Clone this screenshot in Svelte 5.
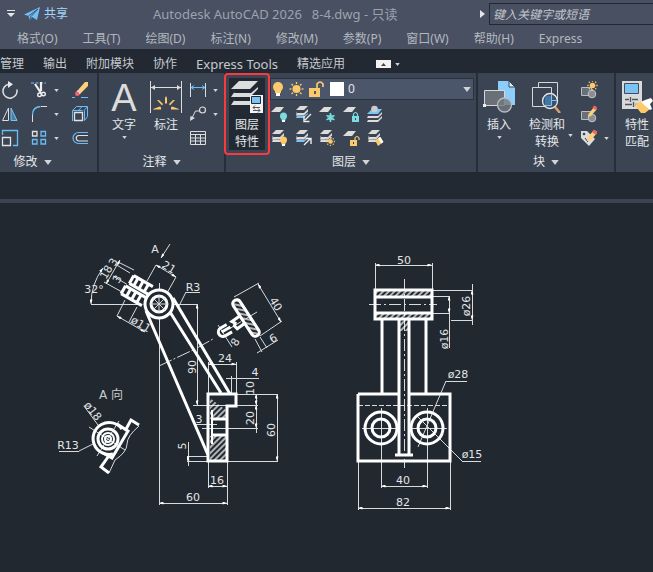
<script lang="ts">
  interface DimText { t: string; x: number; y: number; r?: number }
  type Line = [number, number, number, number]

  const menus = ['格式(O)', '工具(T)', '绘图(D)', '标注(N)', '修改(M)', '参数(P)', '窗口(W)', '帮助(H)', 'Express']
  const tabs = ['管理', '输出', '附加模块', '协作', 'Express Tools', '精选应用']
  const modifyTools = ['rotate', 'trim', 'erase', 'mirror', 'fillet', 'explode', 'scale', 'array', 'offset']
  const annotateTools = ['linear', 'leader', 'table']
  const layerTools = ['off', 'current', 'freeze', 'lock', 'walk', 'on', 'previous', 'thaw', 'unlock', 'match']
  const blockTools = ['create', 'edit', 'attribute']

  let search = $state('')
  let layer = $state('0')

  const dimTexts: DimText[] = [
    { t: 'A', x: 155, y: 249 },
    { t: '21', x: 169, y: 267, r: 30 },
    { t: '18', x: 106, y: 272, r: -60 },
    { t: '3', x: 113, y: 262, r: -60 },
    { t: '3', x: 117, y: 279, r: -60 },
    { t: '32°', x: 94, y: 289 },
    { t: 'R3', x: 193, y: 287 },
    { t: 'ø11', x: 141, y: 324, r: 30 },
    { t: '90', x: 192, y: 367, r: -90 },
    { t: '40', x: 276, y: 304, r: 58 },
    { t: '6', x: 273, y: 338, r: -30 },
    { t: '8', x: 235, y: 342, r: -60 },
    { t: '24', x: 225, y: 358 },
    { t: '4', x: 255, y: 372 },
    { t: '10', x: 250, y: 388, r: -90 },
    { t: '20', x: 250, y: 418, r: -90 },
    { t: '60', x: 271, y: 430, r: -90 },
    { t: '3', x: 199, y: 419 },
    { t: '5', x: 182, y: 446, r: -90 },
    { t: '16', x: 217, y: 480 },
    { t: '60', x: 193, y: 497 },
    { t: 'ø18', x: 93, y: 411, r: 52 },
    { t: 'R13', x: 68, y: 445 },
    { t: '50', x: 404, y: 260 },
    { t: 'ø26', x: 466, y: 306, r: -90 },
    { t: 'ø16', x: 444, y: 339, r: -90 },
    { t: 'ø28', x: 458, y: 374 },
    { t: 'ø15', x: 472, y: 454 },
    { t: '40', x: 403, y: 480 },
    { t: '82', x: 403, y: 502 },
  ]

  // Dimension lines, drawn with an arrow head at both ends
  const dims: Line[] = [
    [156, 265, 176, 277],
    [120, 260, 106, 284],
    [117, 316, 145, 332],
    [197, 304, 197, 405],
    [258, 284, 281, 322],
    [208, 364, 236, 364],
    [256, 394, 256, 405],
    [256, 405, 256, 428],
    [277, 394, 277, 461],
    [188, 456, 188, 461],
    [208, 486, 227, 486],
    [159, 503, 227, 503],
    [375, 265, 432, 265],
    [472, 290, 472, 320],
    [449, 296, 449, 313],
    [381, 486, 427, 486],
    [358, 508, 450, 508],
  ]

  // Extension lines and leaders
  const thin: Line[] = [
    [91, 304, 197, 304], [159, 283, 159, 505],
    [156, 265, 147, 281], [176, 277, 167, 293],
    [118, 262, 134, 270], [104, 282, 122, 292], [113, 276, 160, 304], [115, 264, 130, 273],
    [117, 316, 125, 300], [129, 322, 137, 307],
    [186, 292, 200, 292], [186, 292, 178, 308],
    [234, 297, 259, 283], [260, 336, 282, 321],
    [257, 353, 278, 340], [255, 339, 262, 352], [260, 337, 267, 348],
    [218, 325, 232, 347],
    [208, 362, 208, 394], [236, 362, 236, 394], [231, 376, 231, 394],
    [226, 378, 259, 378],
    [236, 394, 278, 394], [193, 405, 227, 405], [236, 405, 258, 405], [202, 428, 258, 428], [256, 428, 256, 433],
    [196, 424, 217, 424], [187, 461, 278, 461], [187, 456, 208, 456], [188, 442, 188, 466],
    [208, 461, 208, 488], [227, 461, 227, 505],
    [84, 406, 98, 425], [59, 451, 79, 451], [79, 451, 93, 444],
    [89, 427, 125, 450], [119, 421, 97, 456],
    [375, 263, 375, 289], [432, 263, 432, 289],
    [433, 290, 473, 290], [451, 320, 473, 320], [472, 284, 472, 325],
    [433, 296, 450, 296], [433, 313, 450, 313], [449, 313, 449, 348],
    [446, 381, 467, 381], [446, 381, 418, 447],
    [462, 461, 481, 461], [462, 461, 416, 415],
    [362, 428, 400, 428], [409, 428, 447, 428], [381, 408, 381, 488], [427, 408, 427, 488],
    [358, 461, 358, 510], [450, 461, 450, 510],
  ]
</script>

{#snippet caret(cls = '')}
  <svg class="caret {cls}" width="5" height="3" viewBox="0 0 6 4" aria-hidden="true"><path d="M0 0h6L3 4z" /></svg>
{/snippet}

{#snippet bulb(color: string)}
  <path d="M11.500 14h4v1.500h-4z" fill={color} />
  <circle cx="13.500" cy="11" r="3.500" fill={color} />
  <path d="M12 15h3v2h-3z" fill="#fff" />
{/snippet}

{#snippet sun(x: number, y: number, r: number)}
  <circle cx={x} cy={y} {r} fill="#fdca6b" />
  {#each [0, 45, 90, 135, 180, 225, 270, 315] as a}
    <path d="M{x + r + 1} {y}h{r / 2}" stroke="#fdca6b" stroke-width="1.300" transform="rotate({a} {x} {y})" />
  {/each}
{/snippet}

{#snippet stack(mid: string, bottom: string)}
  <path d="M6 1h8l-4 4H2z" fill="#dcdcdc" />
  <path d="M3 6.500 2 8h8l4-4v2.500l-4 4H2z" fill={mid} />
  <path d="M3 10.500 2 13h8l4-4v-1l-4 3z" fill={bottom} />
{/snippet}

{#snippet icon(name: string)}
  <svg class="icon" width="18" height="18" viewBox="0 0 18 18" fill="none" aria-hidden="true">
    {#if name === 'rotate'}
      <path d="M15.800 8.500A7 7 0 1 1 8 3.200" stroke="#e2e2e2" stroke-width="1.500" />
      <path d="M7 0l5 3.300L7 7z" fill="#e8e8e8" />
    {:else if name === 'trim'}
      <path d="M1 2h15" stroke="#7cc3f5" stroke-dasharray="3 1.500" />
      <path d="M5 3l6 9M11 1v9" stroke="#eee" stroke-width="2.200" />
      <circle cx="9.500" cy="13.800" r="1.800" stroke="#eee" stroke-width="1.400" />
      <circle cx="13.500" cy="13" r="1.800" stroke="#eee" stroke-width="1.400" />
    {:else if name === 'erase'}
      <path d="M14 1l3 0v4l-7 7-3-3z" fill="#fdd07a" />
      <path d="M7 9l3 3-1.500 1.500-3-3z" fill="#fff" />
      <circle cx="6.300" cy="12.700" r="2.300" fill="#f4636b" />
      <path d="M1 16.500h3M10 16.500h7" stroke="#68bdf6" />
    {:else if name === 'mirror'}
      <path d="M7.500 3v12.500H1.500z" stroke="#ddd" />
      <path d="M10 3v12.500h6z" fill="#487fa9" stroke="#7cc3f5" />
    {:else if name === 'fillet'}
      <path d="M2.500 17V9" stroke="#ddd" />
      <path d="M2.500 10q0-8 8-8.500" stroke="#68bdf6" stroke-width="1.300" />
      <path d="M11 1.500h6" stroke="#ddd" />
    {:else if name === 'explode'}
      <path d="M3.500 7.500h8v8h-8z" stroke="#e2e2e2" stroke-width="1.300" />
      <path d="M1.500 16V5.500h10M2 5l3.500-3.500h11L13 5.500M8 5l3-3.500M16.500 2v9.500l-3 4V5.500" stroke="#68bdf6" />
    {:else if name === 'scale'}
      <path d="M1.500 8.500h8v8h-8z" stroke="#e2e2e2" stroke-width="1.300" />
      <path d="M1.500 6V1.500h15v15H12" stroke="#68bdf6" stroke-width="1.300" />
    {:else if name === 'array'}
      <path d="M2.500 2.500H7V7H2.500z" stroke="#e2e2e2" stroke-width="1.300" />
      <path d="M11 2.500h4.500V7H11zM2.500 10.500H7V15H2.500zM11 10.500h4.500V15H11z" stroke="#68bdf6" stroke-width="1.300" />
    {:else if name === 'offset'}
      <path d="M17 3.500H7.500a5.500 5.500 0 0 0 0 11H17" stroke="#68bdf6" stroke-width="1.200" />
      <path d="M17 6.500H8a2.700 2.700 0 0 0 0 5.500h9" stroke="#e2e2e2" stroke-width="1.200" />
    {:else if name === 'linear'}
      <path d="M1.500 2v14M16.500 2v14" stroke="#ddd" />
      <path d="M2 6.500h14M5 4.500l-3 2 3 2M13 4.500l3 2-3 2" stroke="#68bdf6" />
    {:else if name === 'leader'}
      <circle cx="13.500" cy="5" r="3" stroke="#ddd" stroke-width="1.200" />
      <path d="M10.500 6H6.500L3 13" stroke="#ddd" />
      <path d="M1 16l.5-5L6 13z" fill="#ddd" />
    {:else if name === 'table'}
      <path d="M1.500 2.500h15v13h-15zM1.500 5.500h15M1.500 9h15M1.500 12h15M6.500 6v9.500M11.500 6v9.500" stroke="#ddd" />
    {:else if name === 'off'}
      <path d="M6 2h8l-4 5H1z" fill="#dcdcdc" />
      {@render bulb('#7adbe3')}
    {:else if name === 'current'}
      {@render stack('#dcdcdc', '#7cc3f5')}
      <path d="M17 9l-6 6M10 11v5.500h5.500" stroke="#eee" stroke-width="1.400" />
    {:else if name === 'freeze'}
      <path d="M6 2h8l-4 5H1z" fill="#dcdcdc" />
      <path d="M12.500 8v9M8.500 10.300l8 4.500M16.500 10.300l-8 4.500" stroke="#7adbe3" stroke-width="1.500" />
      <circle cx="12.500" cy="12.500" r="2.500" stroke="#7adbe3" />
    {:else if name === 'lock'}
      <path d="M6 2h8l-4 5H1z" fill="#dcdcdc" />
      <path d="M10 11h7v6h-7z" fill="#7adbe3" />
      <path d="M11.500 11V9q2-3 4 0v2" stroke="#7adbe3" stroke-width="1.200" />
      <path d="M13 13h1v2h-1z" fill="#3b4453" />
    {:else if name === 'walk'}
      <path d="M6 4h10l-4 5H1z" fill="#7cc3f5" />
      <circle cx="8.500" cy="4" r="3.300" fill="#c9cbcf" />
      <path d="M2 11h10l4-4v2l-4 4H1zM2 15h10l4-4v2l-4 4H1z" fill="#dcdcdc" />
    {:else if name === 'on'}
      {@render stack('#dcdcdc', '#dcdcdc')}
      {@render bulb('#fdca6b')}
    {:else if name === 'previous'}
      {@render stack('#dcdcdc', '#7cc3f5')}
      <path d="M10 16l6-6M11.500 9.500H17V15" stroke="#eee" stroke-width="1.400" />
    {:else if name === 'thaw'}
      {@render stack('#dcdcdc', '#dcdcdc')}
      {@render sun(12.500, 12.500, 2.300)}
    {:else if name === 'unlock'}
      <path d="M6 2h8l-4 5H1z" fill="#dcdcdc" />
      <path d="M8 11h7v6H8z" fill="#fdca6b" />
      <path d="M13 11V9q2-3 4 0v2" stroke="#fdca6b" stroke-width="1.200" />
      <path d="M11 13h1v2h-1z" fill="#3b4453" />
    {:else if name === 'match'}
      {@render stack('#dcdcdc', '#dcdcdc')}
      <path d="M9 11l4-2 3 5-4 3z" fill="#fdca6b" />
      <path d="M12 9l2.500-1 3 5-2 1.500z" fill="#fff" />
    {:else if name === 'create' || name === 'edit'}
      <path d="M1.500 6.500h10v8h-10z" fill="#6b7078" stroke="#b9bcc1" />
      <circle cx="12" cy="13" r="3.800" fill="#8a8e95" stroke="#c4c6ca" />
      {#if name === 'create'}
        {@render sun(12.500, 4.500, 2.800)}
      {:else}
        <path d="M14 2l3 2-6 7-3 1 .5-3z" fill="#fdd07a" />
        <path d="M14 .500l3 1.500-1.500 3-3-2z" fill="#f4636b" />
      {/if}
    {:else if name === 'attribute'}
      <path d="M1 2h6l8 8-6 7-8-8z" fill="#dcdcdc" />
      <circle cx="4" cy="5" r="1.300" fill="#3b4453" />
      <path d="M5 9l3 4" stroke="#3b4453" />
      <path d="M13 2l4 2-6 7-4 1 1-4z" fill="#fdd07a" />
      <path d="M13.500 .500l4 2-2 3-3-2z" fill="#f4636b" />
    {/if}
  </svg>
{/snippet}

<div class="app">
  <header class="title-bar">
    <button class="quick" type="button" aria-label="自定义快速访问工具栏">
      <svg width="8" height="8" viewBox="0 0 8 8"><path d="M0 0h8v1H0zM0 3h8L4 7z" fill="#e4e6e9" /></svg>
    </button>
    <button class="share" type="button">
      <svg width="16" height="15" viewBox="0 0 16 15" aria-hidden="true">
        <path d="M0 7.500 16 0l-3 13-5-3-2.500 4-1-5z" fill="#6fc0f8" />
        <path d="M4.500 9 14 2 6.500 10l-1 4" fill="none" stroke="#485062" />
      </svg>
      共享
    </button>
    <h1><span>Autodesk AutoCAD 2026</span><span>8-4.dwg - 只读</span></h1>
    <div class="search">
      <svg width="5" height="8" viewBox="0 0 5 8" aria-hidden="true"><path d="M0 0l5 4-5 4z" fill="#e4e6e9" /></svg>
      <input type="text" bind:value={search} placeholder="键入关键字或短语" aria-label="键入关键字或短语" />
    </div>
  </header>

  <nav class="menu-bar">
    {#each menus as m}
      <button type="button">{m}</button>
    {/each}
  </nav>

  <nav class="tabs">
    {#each tabs as t}
      <button class:latin={t.startsWith('Express')} type="button">{t}</button>
    {/each}
    <button class="minimize" type="button" aria-label="最小化功能区">
      <svg width="15" height="8" viewBox="0 0 15 8"><path d="M0 0h15v8H0z" fill="#f2f2f2" /><path d="M5 6l2.500-3L10 6z" fill="#444" /></svg>
      {@render caret()}
    </button>
  </nav>

  <main class="ribbon">
    <section class="panel modify">
      <div class="body">
        <div class="modify-grid">
          {#each modifyTools as name, i}
            <button type="button" aria-label={name}>{@render icon(name)}</button>
            {#if i % 3 === 1}
              <button class="drop" type="button" aria-label="{name} 选项">{@render caret()}</button>
            {/if}
          {/each}
        </div>
      </div>
      <button class="panel-name" type="button">修改 {@render caret('wide')}</button>
    </section>

    <section class="panel annotate">
      <div class="body">
        <button class="large" type="button">
          <svg class="letter" width="32" height="32" viewBox="0 0 32 32" aria-hidden="true">
            <text x="16" y="30">A</text>
          </svg>
          <span>文字</span>
          {@render caret()}
        </button>
        <button class="large" type="button">
          <svg width="32" height="32" viewBox="0 0 32 32" fill="none" aria-hidden="true">
            <path d="M.500 0v32M31.500 0v32M1 6.500h30" stroke="#ddd" />
            <path d="M1 6.500l4-2.500v5zM31 6.500l-4-2.500v5z" fill="#ddd" />
            <path d="M15 17l1-2 1 2v5.500h-2zM7 19l2 0 4 4-1 1.500zM25 19l-2 0-4 4 1 1.500zM3 28l7-2.500 1 1v2H3zM29 28l-7-2.500-1 1v2h8z" fill="#fdca6b" />
          </svg>
          <span>标注</span>
        </button>
        <div class="small-grid">
          {#each annotateTools as name, i}
            <button type="button" aria-label={name}>{@render icon(name)}</button>
            {#if i < 2}
              <button class="drop" type="button" aria-label="{name} 选项">{@render caret()}</button>
            {/if}
          {/each}
        </div>
      </div>
      <button class="panel-name" type="button">注释 {@render caret('wide')}</button>
    </section>

    <section class="panel layers">
      <div class="body">
        <button class="large properties" type="button">
          <svg width="32" height="32" viewBox="0 0 32 32" fill="none" aria-hidden="true">
            <path d="M8 0h19l-8 8H0z" fill="#dcdcdc" />
            <path d="M4 10l-4 6h19l8-8v-2l-7 6H3zM4 18l-4 6h19l8-8v-2l-7 6H3z" fill="#dcdcdc" />
            <path d="M19 14h13v18H19z" fill="#f4f4f4" />
            <path d="M20.500 15.500h9v7h-9z" fill="#7cc3f5" stroke="#222933" />
            <path d="M22 26.500h7M24 24.500l-2 2 2 2M22 29.500h7M27 27.500l2 2-2 2" stroke="#555" />
          </svg>
          <span>图层<br />特性</span>
        </button>
        <div class="layer-tools">
          <div class="layer-combo">
            <svg width="54" height="18" viewBox="0 0 54 18" fill="none" aria-hidden="true">
              <circle cx="7" cy="7" r="5" fill="#fdca6b" />
              <path d="M4 10h6v3H4z" fill="#fdca6b" />
              <path d="M5 13h4v3H5z" fill="#fff" />
              {@render sun(25.500, 9, 4)}
              <path d="M38 8h11v9H38z" fill="#fdca6b" />
              <path d="M46 8V4q3-4 6 0v3" stroke="#fdca6b" stroke-width="1.700" />
              <path d="M43 11h2v3h-2z" fill="#4b566a" />
            </svg>
            <i class="swatch"></i>
            <select bind:value={layer} aria-label="图层">
              <option>0</option>
            </select>
            {@render caret('wide')}
          </div>
          <div class="layer-grid">
            {#each layerTools as name}
              <button type="button" aria-label={name}>{@render icon(name)}</button>
            {/each}
          </div>
        </div>
      </div>
      <button class="panel-name" type="button">图层 {@render caret('wide')}</button>
    </section>

    <section class="panel blocks">
      <div class="body">
        <button class="large" type="button">
          <svg width="32" height="32" viewBox="0 0 32 32" fill="none" aria-hidden="true">
            <path d="M15 0h11l6 6v18H15z" fill="#8ccdfb" />
            <path d="M26 0v6h6z" fill="#d7edfd" stroke="#3b4453" />
            <path d="M1.500 9.500h20v15h-20z" fill="#6b7078" stroke="#d5d7da" />
            <path d="M0 23h3v3H0z" fill="#eee" />
            <circle cx="21.500" cy="24" r="7" fill="#747980" fill-opacity=".8" stroke="#b9bcc1" stroke-width="1.300" />
          </svg>
          <span>插入</span>
          {@render caret()}
        </button>
        <button class="large detect" type="button">
          <svg width="32" height="32" viewBox="0 0 32 32" fill="none" aria-hidden="true">
            <path d="M7.500 6V1.500h19v18H25" stroke="#d5d7da" />
            <path d="M1.500 6.500h19v19h-19z" stroke="#d5d7da" />
            <path d="M24 26l5 6" stroke="#d9a066" stroke-width="2.500" />
            <circle cx="19" cy="20" r="7.500" fill="#3f5166" stroke="#e8e8e8" stroke-width="1.300" />
            <path d="M14 15h6v9h-6z" fill="#4277a3" />
            <path d="M14 24.500h6.500V14M21 19.500h5" stroke="#7cc3f5" />
          </svg>
          <span>检测和<br />转换</span>
        </button>
        <button class="drop" type="button" aria-label="检测和转换 选项">{@render caret()}</button>
        <div class="small-grid">
          {#each blockTools as name}
            <button type="button" aria-label={name}>{@render icon(name)}</button>
          {/each}
          <button class="drop" type="button" aria-label="属性 选项">{@render caret()}</button>
        </div>
      </div>
      <button class="panel-name" type="button">块 {@render caret('wide')}</button>
    </section>

    <section class="panel properties-match">
      <div class="body">
        <button class="large" type="button">
          <svg width="32" height="32" viewBox="0 0 32 32" fill="none" aria-hidden="true">
            <path d="M1 0h20v28H1z" fill="#d9dadc" />
            <path d="M3.500 2.500h14v10h-14z" fill="#7cc3f5" stroke="#444c59" />
            <path d="M4 18.500h4M11 18.500h6M9.500 16v5M4 23.500h7M14 23.500h3M12.500 21v5" stroke="#555" stroke-width="1.300" />
            <path d="M14 23l8-3 7 8-5 4h-4l-4-5z" fill="#fdca6b" />
            <path d="M20 21l4-2 3-1 3-1 2 3-3 3 2 5-2 1z" fill="#fff" />
          </svg>
          <span>特性<br />匹配</span>
        </button>
      </div>
    </section>
  </main>

  <div class="file-tabs"></div>

  <div class="canvas">
    <svg class="drawing" width="653" height="369" viewBox="0 203 653 369" role="img" aria-label="8-4.dwg">
      <defs>
        <pattern id="hatch" width="4" height="4" patternUnits="userSpaceOnUse" patternTransform="rotate(45)">
          <path d="M1 0v4" stroke="#fff" stroke-width="1.300" />
        </pattern>
        <marker id="arrow" viewBox="0 0 6 4" refX="6" refY="2" markerWidth="5" markerHeight="3" orient="auto-start-reverse">
          <path d="M0 0l6 2-6 2z" fill="#fff" />
        </marker>
      </defs>

      <g class="thin">
        {#each thin as [x1, y1, x2, y2]}
          <line {x1} {y1} {x2} {y2} class:crisp={x1 === x2 || y1 === y2} />
        {/each}
        {#each dims as [x1, y1, x2, y2]}
          <line {x1} {y1} {x2} {y2} class:crisp={x1 === x2 || y1 === y2} marker-start="url(#arrow)" marker-end="url(#arrow)" />
        {/each}
        <line x1="170" y1="244" x2="161" y2="258" marker-end="url(#arrow)" />
        <path d="M91 304Q91 284 103 268" marker-start="url(#arrow)" marker-end="url(#arrow)" />
        <path d="M159 366L193 350M197 348L213 339M229 329L257 312" stroke-dasharray="14 2 2 2" />
        <path d="M139 426Q127 436 127 444T115 460L109 473" />
        <path class="crisp" d="M404 279V468M369 304H437" stroke-dasharray="12 3 2 3" />
        <path class="crisp" d="M358 405H450" stroke-dasharray="5 2" />
      </g>

      <!-- side view: sleeve, hub and arm -->
      <g transform="translate(159 304) rotate(30)">
        <path d="M-38-12h25v22h-25z" class="sleeve" />
        <path d="M-36-12h22M-38 10h24M-36-3h24M-38 1h24M-36-12v9M-31-12v9M-25-12v9M-19-12v9M-38 1v9M-32 1v9M-26 1v9M-20 1v9" class="thick" />
      </g>
      <circle cx="159" cy="304" r="14" class="thick solid" />
      <circle cx="159" cy="304" r="8" class="thick" />
      <path d="M150 304h18M159 295v18M153 298l12 12M153 310l12-12" class="thin" />
      <path d="M146 311L208 455M173 298L230 394M170 312L221 393" class="thick" />

      <!-- side view: mounting plate -->
      <path d="M210 436h17v24h-17zM210 398l17 13v8h-17z" fill="url(#hatch)" />
      <path d="M208 394h28v12h-9v55h-19zM213 419h14M213 435h14" class="thick" />
      <path d="M212 410v34" class="medium" />

      <!-- arm section -->
      <g transform="translate(246 318) rotate(57)">
        <path d="M-17-4h34a4 4 0 0 1 0 8h-34a4 4 0 0 1 0-8z" class="thick" fill="url(#hatch)" />
      </g>
      <g transform="translate(246 318) rotate(-30)">
        <path d="M-4-5l-10 1 2 3-2 2 1 4 9-1" class="thick cut" />
        <path d="M-20-4h-7a4 4 0 0 0 0 9h8M-18 0h-10" class="thick" />
      </g>

      <!-- view A -->
      <path d="M122 429A16 16 0 1 0 113 454" class="thick" />
      <circle cx="108" cy="439" r="10" class="thick" />
      <circle cx="108" cy="439" r="6" class="medium" />
      <circle cx="108" cy="439" r="3" class="medium" />
      <path d="M139 425l-8-5-6 11M117 424l11 7-16 27-9-5M108 457l-7 10 8 6" class="thick" />

      <!-- front view -->
      <path d="M376 290h56v7h-56zM376 313h56v6h-56zM400 319h8v12h-8z" fill="url(#hatch)" />
      <path d="M375 290h57v29h-57zM375 297h57M375 313h57" class="thick" />
      <path d="M382 320v74M426 320v74M399 320v135M409 320v135M358 394h41M409 394h41v67h-92v-67M395 455h18" class="thick" />
      {#each [381, 427] as cx}
        <circle {cx} cy="428" r="16" class="thick" />
        <circle {cx} cy="428" r="9" class="thick" />
      {/each}

      <g class="dim-text">
        {#each dimTexts as d}
          <text y="4" transform="translate({d.x} {d.y}) rotate({d.r ?? 0})">{d.t}</text>
        {/each}
      </g>
      <text x="99" y="399" class="view-name">A 向</text>
    </svg>
  </div>
</div>

<style>
  :global(body) {
    margin: 0;
    background: #212830;
  }
  .app {
    display: flex;
    flex-direction: column;
    min-height: 100vh;
    overflow: hidden;
    font: 12px/18px "Noto Sans", "Noto Sans CJK SC", sans-serif;
    color: #e4e6e9;
  }
  button {
    display: flex;
    align-items: center;
    flex-shrink: 0;
    margin: 0;
    padding: 0;
    border: 0;
    background: none;
    color: inherit;
    font: inherit;
    white-space: nowrap;
  }
  svg {
    display: block;
    flex-shrink: 0;
  }
  .caret {
    fill: #d0d3d8;
  }
  .caret.wide {
    width: 8px;
    height: 5px;
  }

  .title-bar {
    display: flex;
    align-items: center;
    height: 28px;
    background: #485062;
  }
  .quick {
    margin-left: 7px;
  }
  .share {
    gap: 4px;
    margin-left: 9px;
    color: #a3d6fb;
  }
  .title-bar h1 {
    display: flex;
    gap: 10px;
    flex-shrink: 0;
    margin: 0 0 0 85px;
    font-size: 13px;
    font-weight: 400;
    color: #9da3ae;
  }
  .search {
    display: flex;
    align-items: center;
    gap: 4px;
    flex: 1;
    min-width: 173px;
    justify-content: flex-end;
  }
  .search input {
    box-sizing: border-box;
    width: 164px;
    height: 22px;
    padding: 0 3px;
    border: 1px solid #222933;
    border-right: 0;
    background: #485062;
    color: #c3c7cd;
    font: inherit;
    font-style: italic;
  }
  .search input::placeholder {
    color: #c3c7cd;
    opacity: 1;
  }

  .menu-bar {
    display: flex;
    gap: 25px;
    height: 21px;
    padding-left: 17px;
    background: #485062;
    color: #b4b8be;
  }
  .tabs {
    display: flex;
    gap: 19px;
    height: 24px;
    padding-top: 1px;
    box-sizing: border-box;
    background: #222933;
    color: #c6c9ce;
  }
  .tabs button {
    height: 28px;
  }
  .tabs .latin {
    font-size: 13px;
  }
  .tabs .minimize {
    gap: 4px;
    margin-left: 12px;
  }

  .ribbon {
    display: flex;
    height: 99px;
    background: #3b4453;
  }
  .panel {
    display: flex;
    flex-direction: column;
    flex-shrink: 0;
    box-sizing: border-box;
    border-right: 2px solid #272e3a;
  }
  .body {
    display: flex;
    height: 80px;
    padding-top: 8px;
    box-sizing: border-box;
  }
  .panel-name {
    gap: 6px;
    align-self: center;
  }
  .modify {
    width: 99px;
  }
  .modify .panel-name {
    margin-right: 32px;
  }
  .modify-grid {
    display: grid;
    grid-template-columns: 29px 18px 23px 18px;
    grid-auto-rows: 18px;
    gap: 6px 0;
    padding-left: 1px;
  }
  .drop {
    width: 16px;
    justify-content: center;
  }
  .large {
    flex-direction: column;
    width: 42px;
    height: 72px;
    line-height: 17px;
    text-align: center;
  }
  .large span {
    margin-top: 3px;
  }
  .large .caret {
    margin-top: 3px;
  }
  .letter {
    overflow: visible;
    font: 38px/32px "Liberation Sans", sans-serif;
    text-anchor: middle;
    fill: #dcdcdc;
  }
  .annotate {
    width: 127px;
  }
  .annotate .body {
    padding-left: 4px;
  }
  .small-grid {
    display: grid;
    grid-template-columns: 18px 16px;
    grid-auto-rows: 18px;
    gap: 6px 0;
    margin-left: 2px;
  }

  .layers {
    width: 252px;
  }
  .layers .body {
    padding: 5px 2px 0 3px;
  }
  .properties {
    position: relative;
    width: 36px;
    padding-top: 3px;
    background: #222933;
  }
  /* highlight ring round the layer properties command */
  .properties::after {
    content: '';
    position: absolute;
    inset: -5px;
    border: 2px solid #f73b3f;
    border-radius: 4px;
  }
  .layer-tools {
    flex: 1;
    margin-left: 5px;
  }
  .layer-combo {
    display: flex;
    align-items: center;
    box-sizing: border-box;
    height: 22px;
    padding-right: 2px;
    border: 1px solid #2b3340;
    background: #4b566a;
  }
  .swatch {
    width: 14px;
    height: 14px;
    margin: 0 4px 0 5px;
    background: #fff;
  }
  .layer-combo select {
    flex: 1;
    padding: 0;
    border: 0;
    appearance: none;
    background: none;
    color: #e4e6e9;
    font: inherit;
  }
  .layer-grid {
    display: grid;
    grid-template-columns: repeat(5, 18px);
    gap: 6px;
    margin-top: 5px;
  }

  .blocks {
    width: 138px;
  }
  .blocks .detect {
    margin-left: 6px;
  }
  .blocks .large + .drop {
    align-self: flex-end;
    height: 36px;
    margin-left: -6px;
  }
  .blocks .small-grid button:nth-child(-n + 3) {
    grid-column: 1;
  }
  .properties-match {
    flex: 1;
    border: 0;
  }

  .file-tabs {
    height: 27px;
    border-bottom: 4px solid #3b4453;
    background: #222933;
  }
  .canvas {
    flex: 1;
    background: #212830;
  }
  .thin {
    fill: none;
    stroke: #d8dadc;
    stroke-width: 1;
  }
  .crisp {
    shape-rendering: crispEdges;
  }
  .medium {
    fill: none;
    stroke: #fff;
    stroke-width: 2;
  }
  .thick {
    stroke: #fff;
    stroke-width: 3;
  }
  .thick:not([fill]) {
    fill: none;
  }
  .thick.solid,
  .sleeve {
    fill: #212830;
  }
  .cut {
    fill: url(#hatch);
  }
  .dim-text text {
    font: 11px "DejaVu Sans", sans-serif;
    text-anchor: middle;
    fill: #e2e4e6;
  }
  .view-name {
    font: 12px "DejaVu Sans", "Noto Sans CJK SC", sans-serif;
    fill: #c8cbce;
  }
</style>
